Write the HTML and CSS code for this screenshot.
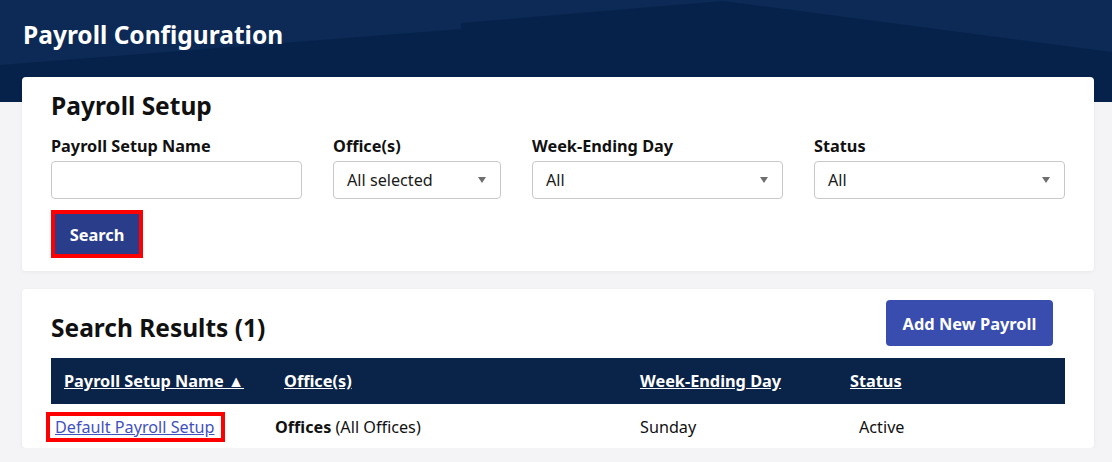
FILE: index.html
```html
<!DOCTYPE html>
<html lang="en">
<head>
<meta charset="utf-8">
<title>Payroll Configuration</title>
<link rel="stylesheet" href="styles.css">
</head>
<body>
<header class="page-header">
  <h1 class="page-title">Payroll Configuration</h1>
</header>
<main class="content">
  <section class="card setup-card">
    <h2 class="card-title">Payroll Setup</h2>
    <div class="filters">
      <div class="field field-wide">
        <label class="field-label">Payroll Setup Name</label>
        <div class="input"></div>
      </div>
      <div class="field field-narrow">
        <label class="field-label">Office(s)</label>
        <div class="input select"><span>All selected</span><span class="caret"></span></div>
      </div>
      <div class="field field-wide">
        <label class="field-label">Week-Ending Day</label>
        <div class="input select"><span>All</span><span class="caret"></span></div>
      </div>
      <div class="field field-wide">
        <label class="field-label">Status</label>
        <div class="input select"><span>All</span><span class="caret"></span></div>
      </div>
    </div>
    <div class="highlight search-wrap"><button class="btn-search">Search</button></div>
  </section>

  <section class="card results-card">
    <div class="results-head">
      <h2 class="card-title results-title">Search Results (1)</h2>
      <button class="btn-add">Add New Payroll</button>
    </div>
    <div class="table">
      <div class="row head-row">
        <div class="th"><span class="u">Payroll Setup Name ▲</span></div>
        <div class="th"><span class="u">Office(s)</span></div>
        <div class="th"><span class="u">Week-Ending Day</span></div>
        <div class="th"><span class="u">Status</span></div>
      </div>
      <div class="row body-row">
        <div class="td td-name"><a class="highlight link" href="#">Default Payroll Setup</a></div>
        <div class="td td-office"><strong>Offices</strong> (All Offices)</div>
        <div class="td td-day">Sunday</div>
        <div class="td td-status">Active</div>
      </div>
    </div>
  </section>
</main>
</body>
</html>
```

FILE: styles.css
```css
* { box-sizing: border-box; }

body {
  margin: 0;
  background: #f4f4f6;
  font-family: "Noto Sans", "Open Sans", sans-serif;
  color: #111;
}

.page-header {
  position: relative;
  height: 102px;
  background: #0d2a56;
  padding: 19px 23px 0;
  overflow: hidden;
}

.page-header::before {
  content: "";
  position: absolute;
  inset: 0;
  background: #07224a;
  clip-path: polygon(0 65px, 461px 29px, 461px 23px, 723px 1px, 100% 52px, 100% 100%, 0 100%);
}

.page-title {
  position: relative;
  margin: 0;
  font-size: 24.5px;
  line-height: 32px;
  font-weight: 700;
  color: #fff;
}

.content {
  position: relative;
  margin-top: -25px;
  padding: 0 18px 0 22px;
  display: flex;
  flex-direction: column;
  gap: 18px;
}

.card {
  background: #fff;
  border-radius: 4px;
  box-shadow: 0 1px 4px rgba(0, 0, 0, 0.05);
}

.setup-card {
  height: 194px;
  padding: 13px 29px 0;
}

.card-title {
  margin: 0;
  font-size: 24.5px;
  line-height: 32px;
  font-weight: 700;
  color: #111;
}

.filters {
  display: flex;
  gap: 31px;
  margin-top: 14px;
}

.field { display: flex; flex-direction: column; gap: 5px; }
.field-wide { width: 251px; }
.field-narrow { width: 168px; }

.field-label {
  font-size: 16.3px;
  line-height: 20px;
  font-weight: 700;
  color: #111;
}

.input {
  height: 38px;
  border: 1px solid #c8c8c8;
  border-radius: 4px;
  background: #fff;
  font-size: 16.2px;
  color: #1a1a1a;
  padding: 0 13px;
  display: flex;
  align-items: center;
  justify-content: space-between;
}

.caret {
  width: 0;
  height: 0;
  border-left: 4.5px solid transparent;
  border-right: 4.5px solid transparent;
  border-top: 6px solid #6f6f6f;
  margin-right: 1px;
}

.highlight {
  border: 4px solid #ff0000;
}

.search-wrap {
  display: inline-flex;
  margin-top: 11px;
}

.btn-search {
  width: 84px;
  height: 40px;
  border: 0;
  background: #2a3d8a;
  color: #fff;
  font-family: inherit;
  font-size: 16.4px;
  font-weight: 700;
  padding: 0;
}

.results-card {
  height: 159px;
  padding: 11px 29px 0;
}

.results-head {
  display: flex;
  justify-content: space-between;
  align-items: flex-start;
}

.results-title {
  margin-top: 12px;
}

.btn-add {
  width: 167px;
  height: 46px;
  margin-right: 12px;
  border: 0;
  border-radius: 4px;
  background: #384dad;
  color: #fff;
  font-family: inherit;
  font-size: 16.4px;
  font-weight: 700;
  padding: 0;
}

.table { margin-top: 12px; }

.row {
  display: grid;
  grid-template-columns: 220px 356px 210px 1fr;
  align-items: center;
}

.head-row {
  height: 46px;
  background: #0a2348;
}

.th {
  padding-left: 13px;
  font-size: 16.3px;
  font-weight: 700;
  color: #fff;
}

.u { text-decoration: underline; }

.body-row {
  height: 45px;
  font-size: 16.2px;
  color: #111;
}

.td-name { margin-left: -5px; }
.td-office { padding-left: 4px; }
.td-day { padding-left: 13px; }
.td-status { padding-left: 22px; }

.link {
  display: inline-block;
  padding: 0 6px 0 5px;
  line-height: 22px;
  color: #3f51c0;
  text-decoration: underline;
}
```
